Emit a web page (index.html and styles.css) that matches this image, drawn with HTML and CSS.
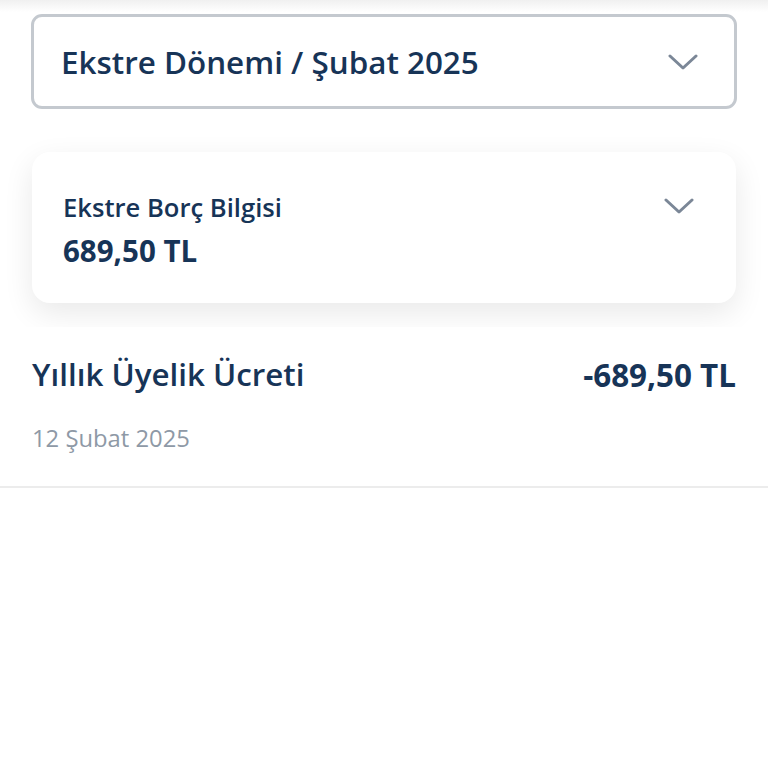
FILE: index.html
```html
<!DOCTYPE html>
<html lang="tr">
<head>
  <meta charset="UTF-8">
  <meta name="viewport" content="width=device-width, initial-scale=1.0">
  <title>Ekstre</title>
  <link rel="stylesheet" href="styles.css">
</head>
<body>
  <div class="top-section">
    <div class="period-select">
      <span class="period-label">Ekstre Dönemi / Şubat 2025</span>
      <svg class="chevron" width="30" height="16" viewBox="0 0 30 16">
        <path d="M2 2 L15 14 L28 2" fill="none" stroke="#7b8797" stroke-width="3" stroke-linecap="round" stroke-linejoin="round"/>
      </svg>
    </div>

    <div class="debt-card">
      <div class="debt-info">
        <div class="debt-title">Ekstre Borç Bilgisi</div>
        <div class="debt-amount">689,50 TL</div>
      </div>
      <svg class="chevron" width="30" height="16" viewBox="0 0 30 16">
        <path d="M2 2 L15 14 L28 2" fill="none" stroke="#7b8797" stroke-width="3" stroke-linecap="round" stroke-linejoin="round"/>
      </svg>
    </div>
  </div>

  <div class="transaction">
    <div class="transaction-row">
      <span class="transaction-name">Yıllık Üyelik Ücreti</span>
      <span class="transaction-amount">-689,50 TL</span>
    </div>
    <div class="transaction-date">12 Şubat 2025</div>
  </div>
</body>
</html>
```

FILE: styles.css
```css
body {
  margin: 0;
  font-family: 'Open Sans', 'Noto Sans', sans-serif;
  background: white;
  color: #173457;
}

.top-section {
  padding: 14px 31px 24px 31px;
  background: white;
  position: relative;
}

/* shadow of the header above */
.top-section::before {
  content: '';
  position: absolute;
  left: 0;
  right: 0;
  top: 0;
  height: 12px;
  background: linear-gradient(#f0f0f0, rgba(255, 255, 255, 0));
}

.period-select {
  position: relative;
  box-sizing: border-box;
  height: 95px;
  border: 3px solid #c4c9cf;
  border-radius: 11px;
  background: white;
  display: flex;
  align-items: center;
  justify-content: space-between;
  padding: 0 36px 0 27px;
}

.period-label {
  font-size: 31.4px;
  line-height: 1;
  font-weight: 600;
}

.debt-card {
  margin: 43px 1px 0 1px;
  height: 151px;
  box-sizing: border-box;
  background: white;
  border-radius: 18px;
  box-shadow: 0 10px 30px rgba(0, 0, 0, 0.09);
  display: flex;
  justify-content: space-between;
  align-items: flex-start;
  padding: 0 42px 0 31px;
}

.debt-info {
  padding-top: 43px;
}

.debt-title {
  font-size: 25.6px;
  line-height: 1;
  font-weight: 600;
}

.debt-amount {
  margin-top: 15px;
  font-size: 29.5px;
  line-height: 1;
  font-weight: 700;
}

.debt-card .chevron {
  margin-top: 46px;
}

.transaction {
  position: relative;
  background: white;
  padding: 32px 32px 35px 32px;
  border-bottom: 2px solid #ececec;
}

.transaction-row {
  display: flex;
  justify-content: space-between;
  align-items: center;
}

.transaction-name {
  font-size: 31.3px;
  line-height: 1;
  font-weight: 600;
}

.transaction-amount {
  font-size: 31.4px;
  line-height: 1;
  font-weight: 700;
}

.transaction-date {
  margin-top: 37px;
  font-size: 23.8px;
  line-height: 1;
  font-weight: 500;
  color: #8e99a6;
}
```
